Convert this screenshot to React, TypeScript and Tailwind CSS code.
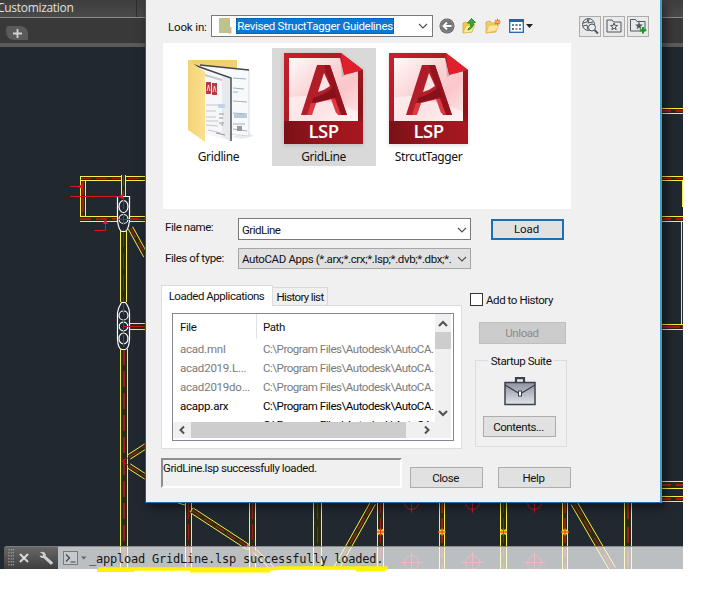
import React from "react";

const UI = "font-['Roboto','Liberation_Sans',sans-serif]";

type Pt = [number, number];

function Beam({ a, b, w, dash = "11 5" }: { a: Pt; b: Pt; w: number; dash?: string }) {
  const dx = b[0] - a[0];
  const dy = b[1] - a[1];
  const len = Math.hypot(dx, dy);
  const nx = (-dy / len) * (w / 2);
  const ny = (dx / len) * (w / 2);
  const straight = dx === 0 || dy === 0;
  return (
    <g shapeRendering={straight ? "crispEdges" : "auto"}>
      <line x1={a[0]} y1={a[1]} x2={b[0]} y2={b[1]} stroke="#2a2b10" strokeWidth={w} />
      <line x1={a[0]} y1={a[1]} x2={b[0]} y2={b[1]} stroke="#a31c1a" strokeWidth="1.2" strokeDasharray={dash} />
      <line x1={a[0] + nx} y1={a[1] + ny} x2={b[0] + nx} y2={b[1] + ny} stroke="#f4f04c" />
      <line x1={a[0] - nx} y1={a[1] - ny} x2={b[0] - nx} y2={b[1] - ny} stroke="#f4f04c" />
    </g>
  );
}

function Target({ x, y, r }: { x: number; y: number; r: number }) {
  return (
    <g stroke="#c2202b" fill="none">
      <circle cx={x} cy={y} r={r - 2} />
      <path d={`M${x - r - 2} ${y}H${x + r + 2}M${x} ${y - r - 1}V${y + r + 1}`} />
    </g>
  );
}

function Drawing() {
  return (
    <svg className="absolute inset-0" width="683" height="569" viewBox="0 0 683 569" fill="none">
      <Beam a={[80, 178.500]} b={[146, 178.500]} w={4} />
      <Beam a={[83, 181]} b={[83, 217]} w={5} dash="14 3" />
      <path d="M80.500 176V222" stroke="#f4f04c" />
      <Beam a={[80, 219]} b={[146, 219]} w={5} />
      <Beam a={[123.500, 175]} b={[123.500, 197]} w={4} />
      <Beam a={[123.500, 231]} b={[123.500, 302]} w={6} dash="16 6" />
      <Beam a={[124, 349]} b={[124, 569]} w={7} dash="16 6" />
      <Beam a={[130, 326.500]} b={[146, 326.500]} w={6} dash="20 2" />
      <Beam a={[130.500, 228]} b={[146, 256]} w={5} />
      <Beam a={[129, 457]} b={[146, 446]} w={5} />
      <Beam a={[129, 466]} b={[146, 477]} w={5} />
      <path d="M128 458L122 461L128 465" stroke="#c3191b" />
      <g stroke="#fff" strokeWidth="1.200">
        <path d="M117.500 196.500H129.500V221Q128 231 125 231.500H122Q119 231 117.500 221Z" fill="#20262d" />
        <ellipse cx="123.500" cy="206.500" rx="4.500" ry="6" />
        <circle cx="123.500" cy="219" r="4.500" />
        <path d="M121.500 302.500H125.500Q129.500 308 129.500 313V339Q129 349 125 349.500H122Q118 349 117.500 339V313Q118 308 121.500 302.500Z" fill="#20262d" />
        <circle cx="123.500" cy="315.500" r="4.500" />
        <circle cx="123.500" cy="326.500" r="4.300" />
        <ellipse cx="123.500" cy="338.500" rx="4.500" ry="5.500" />
      </g>
      <path d="M123.500 197V231M123.500 303V348" stroke="#c3191b" strokeDasharray="12 4" />
      <path d="M124 326.500H145M118 219.500H145" stroke="#c3191b" />
      <path d="M70 186.500H83M70 196.500H122M94 230.500H105.500V219" stroke="#d01a20" />
      <path d="M77 186.500L83 184V189ZM118 196.500L123 194V199ZM105.500 219L103 224H108Z" fill="#e01a20" />

      <Beam a={[188.500, 503]} b={[188.500, 569]} w={6} dash="16 5" />
      <Beam a={[252.500, 503]} b={[252.500, 569]} w={6} dash="16 5" />
      <Beam a={[317.500, 503]} b={[317.500, 569]} w={8} dash="16 8" />
      <Beam a={[380.500, 503]} b={[380.500, 569]} w={6} dash="10 5" />
      <Beam a={[442, 503]} b={[442, 569]} w={5} dash="10 5" />
      <Beam a={[503.500, 503]} b={[503.500, 569]} w={6} dash="10 5" />
      <Beam a={[565, 503]} b={[565, 569]} w={5} dash="10 5" />
      <Beam a={[628, 503]} b={[628, 569]} w={7} dash="16 8" />
      <Beam a={[192, 510.500]} b={[248, 547]} w={5.500} dash="10 4" />
      <Beam a={[255, 551]} b={[273, 569]} w={4} />
      <Beam a={[373, 503]} b={[336, 569]} w={5.500} dash="13 4" />
      <Beam a={[574, 503]} b={[612.500, 569]} w={6.500} dash="14 6" />
      <path d="M178 503L185 505M193 508L190 512M248 544V550" stroke="#f4f04c" />
      {[380.500, 442, 503.500, 565].map((x) => (
        <g key={x}>
          <path d={`M${x - 3.500} 532H${x + 3.500}M${x} 528.500V535.500M${x - 2.500} 529.500L${x + 2.500} 534.500M${x + 2.500} 529.500L${x - 2.500} 534.500`} stroke="#ffd726" strokeWidth="1.300" />
          <path d={`M${x - 4} 532H${x + 4}M${x} 528V536`} stroke="#e1281e" strokeWidth=".9" />
        </g>
      ))}
      {[411.500, 472.500, 534.500].map((x) => (
        <g key={x}>
          <Target x={x} y={502.500} r={9} />
          <Target x={x} y={562.500} r={9} />
        </g>
      ))}

      <Beam a={[660, 111]} b={[683, 111]} w={5} />
      <Beam a={[660, 178.500]} b={[683, 178.500]} w={4} />
      <Beam a={[660, 219]} b={[683, 219]} w={5} />
      <Beam a={[660, 327]} b={[683, 327]} w={5} dash="20 2" />
      <Beam a={[660, 485]} b={[683, 485]} w={7} />
      <Beam a={[660, 499]} b={[683, 499]} w={5} />
      <path d="M682.500 181V207M681.500 222V324" stroke="#f4f04c" />
    </svg>
  );
}

function Chevron({ className = "", dir = "down", bold = false }: { className?: string; dir?: "down" | "up" | "left" | "right"; bold?: boolean }) {
  const d = {
    down: "M1 3L5 7L9 3",
    up: "M1 7L5 3L9 7",
    left: "M7 1.500L3.500 5L7 8.500",
    right: "M3 1.500L6.500 5L3 8.500",
  }[dir];
  return (
    <svg className={`shrink-0 ${className}`} width="10" height="10" viewBox="0 0 10 10" fill="none">
      <path d={d} stroke={bold ? "#505050" : "#4d4d4d"} strokeWidth={bold ? 2 : 1.1} />
    </svg>
  );
}

function Button({ children, className = "border border-[#adadad]" }: { children: React.ReactNode; className?: string }) {
  return (
    <button className={`flex h-[21px] w-[73px] shrink-0 items-center justify-center bg-[#e1e1e1] pr-[2px] ${className}`}>
      {children}
    </button>
  );
}

function FolderPreview() {
  return (
    <svg className="overflow-visible" width="62" height="86" viewBox="0 0 62 86">
      <defs>
        <linearGradient id="flap" x1="0" x2="1">
          <stop offset="0" stopColor="#f3d377" />
          <stop offset="1" stopColor="#fbe08f" />
        </linearGradient>
      </defs>
      <path d="M0 2H49V75L20 70Z" fill="#f2d06f" />
      <path d="M59 74L66 78L54 81L44 79Z" fill="#ebebeb" />
      <path d="M12 7L61 12V78L40 76Z" fill="#f8f9fa" stroke="#c8c8c8" strokeWidth=".6" />
      <path d="M12 7L61 12" stroke="#454950" strokeWidth="1.500" />
      <path d="M45 20L58 21M45 30L56 31M45 34L50 34M45 43L59 44M45 55L59 56M45 66H57M45 71L59 73" stroke="#9fb2c2" strokeWidth="1.200" />
      <path d="M46 56H59V60H46Z" fill="#b9cbda" />
      <path d="M49 68H54V73H49Z" fill="#999" />
      <path d="M6 7L43 20V83L17 76Z" fill="#f6f7f8" />
      <path d="M34 18L43 21V83L34 79Z" fill="#e7e9eb" />
      <path d="M6 7L43 20V83" fill="none" stroke="#3e434a" strokeWidth="1.400" />
      <path d="M17 17L34 22" stroke="#c4cbd1" strokeWidth="2" />
      <rect x="18" y="24" width="5" height="12" fill="#b83a45" />
      <rect x="24" y="25" width="5" height="12" fill="#b83a45" />
      <path d="M19 33L20.500 27L22 33M25 34L26.500 28L28 34" stroke="#f7dadd" fill="none" strokeWidth=".9" />
      <path d="M18 47H31M18 53H28M18 59H28M18 63H30M18 67L30 68M20 72L33 75" stroke="#c3c7cb" />
      <path d="M30 46H37V50H30Z" fill="#c3d5e5" />
      <path d="M31 56H36M31 60H35M31 65H36M33 67H35M28 75L37 77" stroke="#8f979e" strokeWidth="1.200" />
      <path d="M0 2L17 14V84L0 72Z" fill="url(#flap)" />
    </svg>
  );
}

function LspIcon({ id }: { id: string }) {
  return (
    <div className="relative h-[92px] w-[79px]">
      <svg className="drop-shadow-sm" width="79" height="92" viewBox="0 0 79 92">
        <defs>
          <linearGradient id={`${id}f`} x1="0" y1="0" x2="1" y2="1">
            <stop offset="0" stopColor="#c9202b" />
            <stop offset=".45" stopColor="#a81b24" />
            <stop offset=".8" stopColor="#8a1217" />
            <stop offset="1" stopColor="#b01a22" />
          </linearGradient>
          <linearGradient id={`${id}p`} x1="0" y1="0" x2="1" y2="1">
            <stop offset="0" stopColor="#fffafa" />
            <stop offset=".4" stopColor="#fbd5d7" />
            <stop offset=".65" stopColor="#fbc6ca" />
            <stop offset="1" stopColor="#fdeaea" />
          </linearGradient>
          <linearGradient id={`${id}b`} x1="0" y1="0" x2="1" y2="0">
            <stop offset="0" stopColor="#7b1016" />
            <stop offset=".5" stopColor="#971720" />
            <stop offset="1" stopColor="#a7171f" />
          </linearGradient>
          <linearGradient id={`${id}l`} x1="0" y1="0" x2="1" y2="1">
            <stop offset="0" stopColor="#a81b26" />
            <stop offset="1" stopColor="#bd222c" />
          </linearGradient>
        </defs>
        <path d="M0 0H57L79 17V91H0Z" fill={`url(#${id}f)`} />
        <path d="M0 68H79V91H0Z" fill={`url(#${id}b)`} />
        <path d="M5 5H56L60 22L74 18V68H5Z" fill={`url(#${id}p)`} />
        <path d="M5 45Q25 40 42 48Q60 52 74 59V68H5Z" fill="#fff" opacity=".5" />
        <path d="M57 0L79 17L60 22Z" fill="#e11e2b" />
        <path d="M56 4L60 22L66 20L58 24Z" fill="#c6a4a6" opacity=".7" />
        <path d="M33 12H46L63 62H54L48 46L32 50L27 62H17Z" fill={`url(#${id}l)`} />
        <path d="M40 12H46L63 62H57L42 19Z" fill="#96121c" />
        <path d="M29 45Q40 42 50 34L53 44Q42 47 28 50Z" fill="#86111b" />
        <path d="M40 20L34 39Q41 37 46 33Z" fill="#fbe3e5" />
        <path d="M23 62L27 50L32 50L28 62ZM52 60L47 46L51 46L57 62Z" fill="#dd3a44" />
      </svg>
      <span className="absolute inset-x-0 top-[68px] text-center font-['Open_Sans',sans-serif] text-[18.5px] leading-[20px] font-semibold tracking-[-0.5px] text-white">LSP</span>
    </div>
  );
}

function Toolbar() {
  return (
    <div className="flex items-center">
      <svg className="ml-[6px]" width="16" height="16" viewBox="0 0 16 16">
        <circle cx="8" cy="8" r="7.500" fill="#555" />
        <circle cx="8" cy="8" r="6.300" fill="#737373" stroke="#a5a5a5" strokeWidth=".7" />
        <path d="M12.500 8H5M8 4.500L4.500 8L8 11.500" fill="none" stroke="#fff" strokeWidth="1.900" />
      </svg>
      <svg className="ml-[7px]" width="16" height="16" viewBox="0 0 16 16">
        <path d="M1 5L4 4L6 5L10 4V14L1 15Z" fill="#eec94f" stroke="#d3a72c" strokeWidth=".7" />
        <path d="M1 15L4 8L13 6L10 14Z" fill="#ffec99" stroke="#d5b43d" strokeWidth=".7" />
        <path d="M6 11Q10 9 8.500 5H5.500L9.500 .5L13.500 4.500H11.500Q12 10 6 12Z" fill="#32ad35" stroke="#187a20" strokeWidth=".8" />
      </svg>
      <svg className="ml-[7px]" width="16" height="16" viewBox="0 0 16 16">
        <path d="M1 4L5 3L6.500 5H11V14L1 15Z" fill="#efce70" stroke="#d3a33a" strokeWidth=".7" />
        <path d="M1 15L4 7H14L11 13Z" fill="#ffe69a" stroke="#dfb44c" strokeWidth=".7" />
        <path d="M12.500 .8V7.200M9.300 4H15.700M10.300 1.800L14.700 6.200M14.700 1.800L10.300 6.200" stroke="#ee6a28" strokeWidth="1.100" />
        <circle cx="12.500" cy="4" r="1.200" fill="#ffd54a" />
      </svg>
      <svg className="ml-[8px]" width="24" height="16" viewBox="0 0 24 16">
        <rect x=".7" y="1.700" width="13.600" height="12.600" fill="#fff" stroke="#2168b0" strokeWidth="1.300" />
        <rect x="0" y="1" width="15" height="3" fill="#1f65b2" />
        <path d="M3 6H5V8H3ZM10 6H12V8H10Z" fill="#5b82a7" />
        <path d="M6.500 6H8.500V8H6.500ZM3 10H5V12H3Z" fill="#66727b" />
        <path d="M6.500 10H8.500V12H6.500Z" fill="#c98b57" />
        <path d="M10 10H12V12H10Z" fill="#4791a5" />
        <path d="M17 6H24L20.500 10Z" fill="#222" />
      </svg>
    </div>
  );
}

function SquareTool({ children }: { children: React.ReactNode }) {
  return (
    <div className="flex h-[21px] w-[22px] items-center justify-center border border-[#adadad] bg-[#e9e9e9]">
      <svg className="shrink-0" width="18" height="18" viewBox="0 0 18 18" fill="none" stroke="#4f565e" strokeWidth="1">
        {children}
      </svg>
    </div>
  );
}

const STAR = "M9 6L9.800 8.300L12.500 8.500L10.400 10L11.200 12.700L9 11.200L6.800 12.700L7.600 10L5.500 8.500L8.200 8.300Z";

const rows = [
  { file: "acad.mnl", loaded: false },
  { file: "acad2019.L...", loaded: false },
  { file: "acad2019do...", loaded: false },
  { file: "acapp.arx", loaded: true },
  { file: "", loaded: true },
];

function LoadedApps() {
  return (
    <div className="flex w-[301px] flex-col">
      <div className="z-10 flex h-[21px] items-end">
        <div className="-mb-px flex h-[21px] w-[112px] items-center justify-center border border-b-0 border-[#dcdcdc] bg-white pr-[1px] tracking-[-0.47px] whitespace-nowrap">Loaded Applications</div>
        <div className="-mb-px flex h-[19px] w-[55px] items-center justify-center border border-l-0 border-[#d9d9d9] bg-[#f0f0f0] pt-[1px] tracking-[-0.64px] whitespace-nowrap">History list</div>
      </div>
      <div className="h-[144px] border border-[#dcdcdc] bg-white pt-[7px] pl-[10px]">
        <div className="flex h-[128px] w-[282px] flex-col border border-[#828790] pr-[2px] pb-[2px]">
          <div className="flex min-h-0 flex-1">
            <div className="min-w-0 flex-1 overflow-hidden">
              <div className="flex h-[25px] items-center">
                <span className="h-full w-[84px] border-r border-[#e2e2e2] pt-[6px] pl-[7px]">File</span>
                <span className="pt-[1px] pl-[6px]">Path</span>
              </div>
              {rows.map((r, i) => (
                <div key={i} className={`flex h-[19px] items-center whitespace-nowrap ${r.loaded ? "text-black" : "text-[#7a7a7a]"}`}>
                  <span className="w-[90px] shrink-0 pl-[7px] tracking-[-0.22px]">{r.file}</span>
                  <span className="tracking-[-0.46px]">C:\Program Files\Autodesk\AutoCA.</span>
                </div>
              ))}
            </div>
            <div className="flex w-[16px] shrink-0 flex-col items-center bg-[#f0f0f0]">
              <Chevron dir="up" bold className="mt-[5px]" />
              <div className="mt-[3px] h-[17px] w-full bg-[#cdcdcd]" />
              <Chevron bold className="mt-auto mb-[4px]" />
            </div>
          </div>
          <div className="flex h-[16px] items-center bg-[#f0f0f0] pl-[4px]">
            <Chevron dir="left" bold />
            <div className="ml-[4px] h-full w-[215px] bg-[#cdcdcd]" />
            <Chevron dir="right" bold className="ml-[16px]" />
          </div>
        </div>
      </div>
    </div>
  );
}

function Dialog() {
  return (
    <div className={`absolute top-0 left-[145px] flex h-[503px] w-[517px] flex-col border-r-2 border-b border-l border-r-[#35a3c8] border-b-[#2a6ca8] border-l-[#1d5c98] bg-[#f0f0f0] pt-[15px] text-[11.5px] leading-[14px] tracking-[-0.43px] text-[#111] shadow-[3px_4px_10px_rgba(0,0,0,0.5)] ${UI}`}>
      <div className="flex h-[22px] items-center pl-[22px]">
        <span className="w-[43px] pt-[1px] tracking-[-0.15px] whitespace-nowrap">Look in:</span>
        <div className="flex h-[22px] w-[222px] items-center border border-[#7a7a7a] bg-white pr-[4px] pl-[7px]">
          <svg className="shrink-0" width="13" height="16" viewBox="0 0 13 16">
            <path d="M0 0H11V15H0Z" fill="#b8c590" />
            <path d="M11 9H12.500V15.500H9V11Z" fill="#d6b884" />
          </svg>
          <span className="ml-[4px] flex h-[16px] w-[158px] shrink-0 items-center justify-center border border-dotted border-[#5a3b16] bg-[#0a78d4] tracking-[-0.31px] whitespace-nowrap text-white">Revised StructTagger Guidelines</span>
          <Chevron className="ml-auto" />
        </div>
        <Toolbar />
        <div className="ml-auto flex gap-[2px] pr-[11px]">
          <SquareTool>
            <circle cx="7.500" cy="7.500" r="6" />
            <path d="M2 6L6 5L7 2M8 2L7 6L12 5M2 9L6 8L7 13" />
            <circle cx="11" cy="10.500" r="3.500" fill="#e9eef2" />
            <path d="M13.500 13L17 16.500" strokeWidth="1.800" />
          </SquareTool>
          <SquareTool>
            <path d="M2 3H7L8.500 5H16V15H2Z" />
            <path d={STAR} />
          </SquareTool>
          <SquareTool>
            <path d="M1.500 2.500H6.500L8 4.500H16V14H1.500Z" />
            <path d="M10 5L10.900 7.600L13.500 7.800L11.500 9.400L12.200 12L10 10.600L7.800 12L8.500 9.400L6.500 7.800L9.100 7.600Z" fill="#4f565e" strokeWidth=".3" />
            <path d="M14 10V16.500M10.700 13.200H17.300" stroke="#179b20" strokeWidth="2" />
          </SquareTool>
        </div>
      </div>

      <div className="mt-[6px] ml-[17px] flex h-[166px] w-[408px] bg-white pt-[5px] font-['Noto_Sans',sans-serif] text-[12px] tracking-[-0.38px]">
        <div className="flex h-[118px] w-[109px] flex-col items-center pt-[10px] pl-[2px]">
          <FolderPreview />
          <span className="mt-[6px]">Gridline</span>
        </div>
        <div className="flex h-[118px] w-[104px] flex-col items-center bg-[#d9d9d9] pt-[5px] pr-[1px]">
          <LspIcon id="g" />
          <span className="mt-[5px]">GridLine</span>
        </div>
        <div className="flex h-[118px] w-[105px] flex-col items-center pt-[5px]">
          <LspIcon id="s" />
          <span className="mt-[5px]">StrcutTagger</span>
        </div>
      </div>

      <div className="mt-[9px] flex h-[22px] items-center pl-[19px]">
        <span className="w-[73px] pb-[4px]">File name:</span>
        <div className="flex h-[22px] w-[233px] items-center border border-[#7a7a7a] bg-white pt-[1px] pr-[3px] pl-[3px] tracking-[-0.5px]">
          GridLine
          <Chevron className="ml-auto" />
        </div>
        <Button className="ml-[20px] border-2 border-[#1b6fb3] tracking-[-0.1px]">Load</Button>
      </div>
      <div className="mt-[8px] flex h-[21px] items-center pl-[19px]">
        <span className="w-[73px] pb-[1px]">Files of type:</span>
        <div className="flex h-[21px] w-[233px] items-center border border-[#a5a5a5] bg-[#e1e1e1] pr-[3px] pl-[3px] tracking-[-0.37px] whitespace-nowrap">
          AutoCAD Apps (*.arx;*.crx;*.lsp;*.dvb;*.dbx;*.
          <Chevron className="ml-auto" />
        </div>
      </div>

      <div className="mt-[15px] flex h-[165px] pl-[15px]">
        <LoadedApps />
        <div className="flex w-[106px] flex-col pt-[9px] pl-[8px]">
          <label className="flex h-[13px] items-center whitespace-nowrap">
            <span className="mr-[3px] h-[13px] w-[13px] shrink-0 border border-[#333] bg-white" />
            Add to History
          </label>
          <div className="mt-[16px] ml-[9px] flex h-[22px] w-[87px] items-center justify-center border border-[#bfbfbf] bg-[#cccccc] pr-[1px] text-[#8b8b8b]">Unload</div>
          <div className="mt-[16px] ml-[5px] flex h-[87px] w-[92px] shrink-0 flex-col items-center border border-[#dcdcdc]">
            <span className="-mt-[7px] bg-[#f0f0f0] px-[3px] whitespace-nowrap">Startup Suite</span>
            <svg className="mt-[9px] mr-[2px]" width="32" height="29" viewBox="0 0 32 29">
              <defs>
                <linearGradient id="bag" x2="0" y2="1">
                  <stop offset="0" stopColor="#8d929f" />
                  <stop offset="1" stopColor="#e0e4ea" />
                </linearGradient>
              </defs>
              <path d="M12 5V1.200H20V5" fill="none" stroke="#3c404c" strokeWidth="2.200" />
              <rect x="1" y="5.500" width="30" height="22" fill="url(#bag)" stroke="#3c404c" strokeWidth="1.500" />
              <path d="M1 8L16 17L31 8" fill="none" stroke="#3c404c" strokeWidth="1.300" />
              <rect x="14.500" y="14" width="3" height="5" fill="#fff" stroke="#3c404c" />
            </svg>
            <Button className="mt-[10px] mr-[3px] border border-[#adadad]">Contents...</Button>
          </div>
        </div>
      </div>

      <div className="mt-[9px] flex h-[30px] items-end pl-[15px]">
        <div className="h-[30px] w-[241px] border-2 border-t-[#8e8e8e] border-r-white border-b-white border-l-[#8e8e8e] pt-[1px] tracking-[-0.43px]">GridLine.lsp successfully loaded.</div>
        <Button className="ml-[8px] border border-[#adadad]">Close</Button>
        <Button className="ml-[15px] border border-[#adadad]">Help</Button>
      </div>
    </div>
  );
}

function CommandLine() {
  return (
    <div className="absolute top-[546px] left-[4px] flex h-[23px] w-[679px]">
      <div className="flex w-[54px] items-center rounded-tl-[3px] border-t border-[#7b7b7b] bg-linear-to-b from-[#686868] to-[#3e3e3e] pl-[4px]">
        <svg width="46" height="18" viewBox="0 0 46 18" fill="none">
          <path d="M.8 0V18M3.300 0V18M5.300 0V18" stroke="#999" strokeWidth="1.200" strokeDasharray="1.500 1.500" />
          <path d="M12 5L20 13M20 5L12 13" stroke="#d8d8d8" strokeWidth="2" />
          <path d="M32 3.500Q34 2 36.500 3.500Q38.500 5 37.700 7L45 13.500Q44.500 16 42.500 15.500L35.500 9Q32.500 9.500 31.500 6.500L34.500 7L35 5Z" fill="#d0d0d0" />
        </svg>
      </div>
      <div className="flex flex-1 items-center border-t border-[#8a8c8e] bg-white/70 pl-[5px]">
        <svg width="24" height="15" viewBox="0 0 24 15" fill="none">
          <rect x=".5" y=".5" width="14" height="13" fill="#c5c8cc" stroke="#777b80" />
          <path d="M3 3.500L6.500 7L3 10.500M7.500 11H12.500" stroke="#3d4347" strokeWidth="1.200" />
          <path d="M18 5.500H23.500L20.700 8.500Z" fill="#666" />
        </svg>
        <span className="ml-[2px] pt-[1px] font-['DejaVu_Sans_Mono',monospace] text-[12px] leading-[16px] tracking-[-0.22px] whitespace-pre text-[#151515]">_appload GridLine.lsp successfully loaded.</span>
      </div>
    </div>
  );
}

export default function App() {
  return (
    <div className="relative h-[606px] w-[723px] overflow-hidden bg-white">
      <div className="relative flex h-[569px] w-[683px] flex-col overflow-hidden bg-[#212830]">
        <div className="flex h-[17px] bg-linear-to-b from-[#3d3d3d] to-[#4a4a4a]">
          <div className="w-[137px] border-r border-[#2d2d2d] font-['Open_Sans',sans-serif] text-[12px] leading-[15px] tracking-[-0.3px] whitespace-nowrap text-[#e0e0e0]">
            <span className="-ml-[3px]">Customization</span>
          </div>
        </div>
        <div className="h-[26px] border-t border-[#8a8a8a] bg-[#393939] pt-[8px] pl-[6px]">
          <div className="flex h-[14px] w-[22px] items-center justify-center rounded-tl-[3px] rounded-tr-[8px] rounded-bl-[8px] bg-[#5a5a5a]">
            <svg width="9" height="9" viewBox="0 0 9 9">
              <path d="M4.500 0V9M0 4.500H9" stroke="#d2d2d2" strokeWidth="1.800" />
            </svg>
          </div>
        </div>
        <div className="h-[4px] bg-[#5b5b5b]" />
        <Drawing />
        <Dialog />
        <CommandLine />
      </div>
      <svg className="absolute top-[564px] left-[94px]" width="300" height="10" viewBox="0 0 300 10" fill="none">
        <path d="M4 5H96M94 5H178L186 4H294" stroke="#fff200" strokeWidth="3.500" />
        <path d="M3 6.500H40M96 7H176M262 6H291" stroke="#fff200" strokeWidth="3" />
      </svg>
    </div>
  );
}
